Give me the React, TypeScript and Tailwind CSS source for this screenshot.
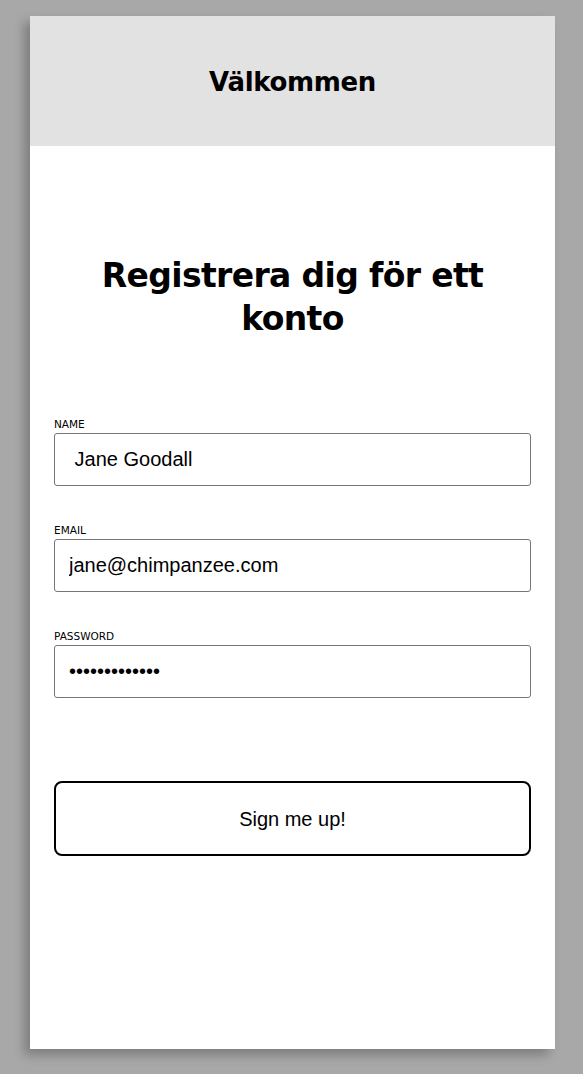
import React from "react";

const sans = "font-['DejaVu_Sans',sans-serif]";
const arial = "font-['Liberation_Sans',Arial,sans-serif]";

function Field({ label, type, value }: { label: string; type: string; value: string }) {
  return (
    <div className="flex flex-col">
      <label className={`${sans} text-[10.5px] leading-[12px] text-black uppercase`}>{label}</label>
      <input
        readOnly
        type={type}
        value={value}
        className={`${arial} mt-[3px] h-[53px] w-full rounded-[3px] border border-[#767676] bg-white pl-[14px] text-[20px] text-black outline-none`}
      />
    </div>
  );
}

export default function App() {
  return (
    <div className="min-h-[1074px] bg-[#a8a8a8] pt-[16px] pl-[30px] pb-[25px]">
      <div className="flex h-[1033px] w-[525px] flex-col bg-white shadow-[-6px_6px_10px_rgba(0,0,0,0.25)]">
        <div className="flex h-[130px] items-center justify-center bg-[#e2e2e2] pt-[2px]">
          <h1 className={`${sans} text-[26px] font-bold tracking-[-0.35px] text-black`}>Välkommen</h1>
        </div>
        <div className="flex flex-col px-[24px]">
          <h2
            className={`${sans} mt-[108px] text-center text-[33px] font-bold leading-[43px] tracking-[-0.65px] text-black px-[40px]`}
          >
            Registrera dig för ett konto
          </h2>
          <div className="mt-[78px] flex flex-col gap-[38px]">
            <Field label="Name" type="text" value=" Jane Goodall" />
            <Field label="Email" type="email" value="jane@chimpanzee.com" />
            <Field label="Password" type="password" value="chimpanzee123" />
          </div>
          <button
            className={`${arial} mt-[83px] h-[75px] w-full rounded-[8px] border-2 border-black bg-white text-[20px] text-black`}
          >
            Sign me up!
          </button>
        </div>
      </div>
    </div>
  );
}
